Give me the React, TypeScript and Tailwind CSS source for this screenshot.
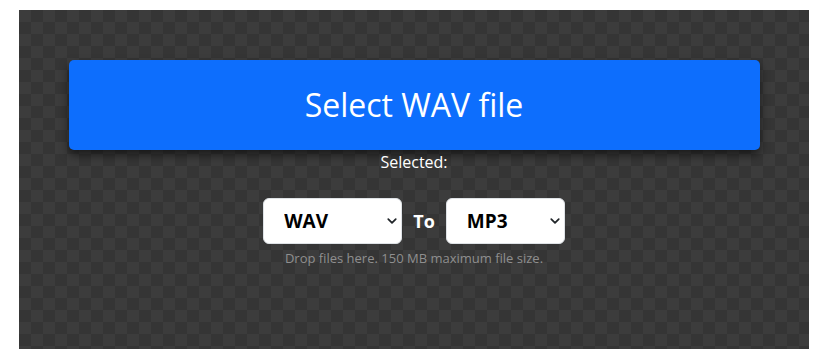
import { useState } from "react";

const formats = ["WAV", "MP3", "OGG", "FLAC", "AAC", "M4A"];

function Chevron() {
  return (
    <svg
      className="pointer-events-none absolute right-[5px] top-1/2 -translate-y-1/2"
      width="10"
      height="10"
      viewBox="0 0 16 16"
      fill="none"
      stroke="#212529"
      strokeWidth="2.8"
      strokeLinecap="round"
      strokeLinejoin="round"
    >
      <path d="M2 5l6 6 6-6" />
    </svg>
  );
}

function FormatSelect({
  value,
  onChange,
  width,
}: {
  value: string;
  onChange: (v: string) => void;
  width: string;
}) {
  return (
    <div className={`relative ${width}`}>
      <select
        value={value}
        onChange={(e) => onChange(e.target.value)}
        className="h-[46px] w-full appearance-none rounded-md border border-[#dee2e6] bg-white pl-[20px] pr-6 text-[19px] font-bold text-black outline-none"
      >
        {formats.map((f) => (
          <option key={f} value={f}>
            {f}
          </option>
        ))}
      </select>
      <Chevron />
    </div>
  );
}

export default function App() {
  const [from, setFrom] = useState("WAV");
  const [to, setTo] = useState("MP3");

  return (
    <div className="h-[359px] w-[818px] bg-white px-[19px] pt-[10px] font-['Open_Sans',sans-serif]">
      <div className="flex h-[339px] w-[790px] flex-col items-center bg-[#363636] bg-[conic-gradient(#353535_25%,#3c3c3c_0_50%,#353535_0_75%,#3c3c3c_0)] bg-[length:24px_24px] pt-[50px]">
        <button className="flex h-[90px] w-[691px] items-center justify-center rounded-[5px] bg-[#0d6efd] text-[32px] text-white shadow-[0_5px_10px_rgba(0,0,0,0.55)]">
          Select WAV file
        </button>
        <p className="text-[16px] leading-[24px] text-white">Selected:</p>
        <div className="mt-[24px] flex items-center gap-[11px]">
          <FormatSelect value={from} onChange={setFrom} width="w-[139px]" />
          <span className="text-[18px] font-bold text-white">To</span>
          <FormatSelect value={to} onChange={setTo} width="w-[119px]" />
        </div>
        <p className="mt-[4px] text-[13px] leading-[20px] text-[#8f8f8f]">
          Drop files here. 150 MB maximum file size.
        </p>
      </div>
    </div>
  );
}
